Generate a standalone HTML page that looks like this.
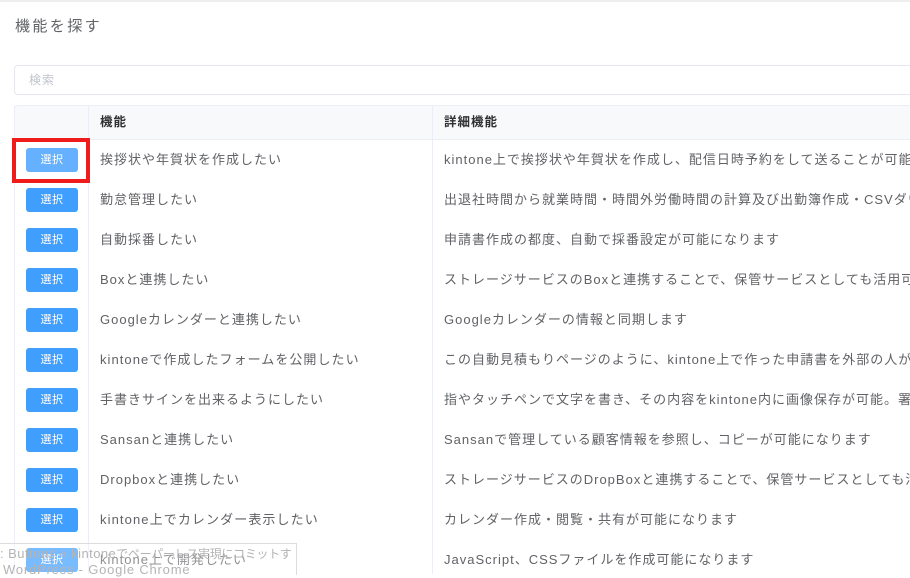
<!DOCTYPE html>
<html lang="ja"><head><meta charset="utf-8"><style>
html,body{margin:0;padding:0;background:#fff}
body{width:910px;height:574px;position:relative;overflow:hidden;font-family:"Liberation Sans","Noto Sans CJK JP",sans-serif;color:#606266;font-size:13px;letter-spacing:1px}
.a{position:absolute;white-space:nowrap}
.t{line-height:18px;filter:blur(.35px)}
.d{width:466px;overflow:hidden}
.b{position:absolute;left:26px;width:52px;height:24px;background:#409eff;border-radius:3px;color:#fff;font-size:11px;letter-spacing:.5px;line-height:25px;text-align:center;filter:blur(.2px)}
.l{position:absolute;background:#ebeef5}
</style></head><body>
<div class="l" style="left:0;top:0;width:910px;height:2px;background:#eeeeee"></div>
<div class="a t" style="left:15px;top:18px;font-size:15px;letter-spacing:2.4px;color:#606266">機能を探す</div>
<div class="a" style="left:14px;top:65px;width:896px;height:28px;border:1px solid #e4e7ed;border-right:0;border-radius:4px 0 0 4px"></div>
<div class="a t" style="left:29px;top:71px;font-size:12px;letter-spacing:1px;color:#c0c4cc">検索</div>

<div class="a" style="left:14px;top:105px;width:896px;height:33px;background:#f8f9fb;border:1px solid #ebeef5;border-right:0;border-radius:4px 0 0 0"></div>
<div class="l" style="left:14px;top:106px;width:1px;height:468px"></div>
<div class="l" style="left:88px;top:106px;width:1px;height:468px"></div>
<div class="l" style="left:432px;top:106px;width:1px;height:468px"></div>
<div class="a t" style="left:100px;top:113px;font-weight:700;font-size:12.5px;color:#303133">機能</div>
<div class="a t" style="left:444px;top:113px;font-weight:700;font-size:12.5px;color:#303133">詳細機能</div>

<div class="b" style="top:148px;background:#66b1ff">選択</div>
<div class="b" style="top:188px">選択</div>
<div class="b" style="top:228px">選択</div>
<div class="b" style="top:268px">選択</div>
<div class="b" style="top:308px">選択</div>
<div class="b" style="top:348px">選択</div>
<div class="b" style="top:388px">選択</div>
<div class="b" style="top:428px">選択</div>
<div class="b" style="top:468px">選択</div>
<div class="b" style="top:508px">選択</div>
<div class="b" style="top:548px">選択</div>

<div class="a t" style="left:100px;top:151px">挨拶状や年賀状を作成したい</div>
<div class="a t" style="left:100px;top:191px">勤怠管理したい</div>
<div class="a t" style="left:100px;top:231px">自動採番したい</div>
<div class="a t" style="left:100px;top:271px">Boxと連携したい</div>
<div class="a t" style="left:100px;top:311px">Googleカレンダーと連携したい</div>
<div class="a t" style="left:100px;top:351px;letter-spacing:1.05px">kintoneで作成したフォームを公開したい</div>
<div class="a t" style="left:100px;top:391px">手書きサインを出来るようにしたい</div>
<div class="a t" style="left:100px;top:431px">Sansanと連携したい</div>
<div class="a t" style="left:100px;top:471px">Dropboxと連携したい</div>
<div class="a t" style="left:100px;top:511px;letter-spacing:1.1px">kintone上でカレンダー表示したい</div>
<div class="a t" style="left:100px;top:551px">kintone上で開発したい</div>

<div class="a t d" style="left:444px;top:151px">kintone上で挨拶状や年賀状を作成し、配信日時予約をして送ることが可能です</div>
<div class="a t d" style="left:444px;top:191px">出退社時間から就業時間・時間外労働時間の計算及び出勤簿作成・CSVダウンロードが可能です</div>
<div class="a t d" style="left:444px;top:231px">申請書作成の都度、自動で採番設定が可能になります</div>
<div class="a t d" style="left:444px;top:271px">ストレージサービスのBoxと連携することで、保管サービスとしても活用可能です</div>
<div class="a t d" style="left:444px;top:311px">Googleカレンダーの情報と同期します</div>
<div class="a t d" style="left:444px;top:351px">この自動見積もりページのように、kintone上で作った申請書を外部の人が利用できます</div>
<div class="a t d" style="left:444px;top:391px">指やタッチペンで文字を書き、その内容をkintone内に画像保存が可能。署名にも</div>
<div class="a t d" style="left:444px;top:431px">Sansanで管理している顧客情報を参照し、コピーが可能になります</div>
<div class="a t d" style="left:444px;top:471px">ストレージサービスのDropBoxと連携することで、保管サービスとしても活用可能です</div>
<div class="a t d" style="left:444px;top:511px">カレンダー作成・閲覧・共有が可能になります</div>
<div class="a t d" style="left:444px;top:551px">JavaScript、CSSファイルを作成可能になります</div>

<div class="a" style="left:12px;top:138px;width:70px;height:37px;border:4px solid #f01c1c"></div>

<div class="a" style="left:0;top:543px;width:296px;height:31px;background:rgba(255,255,255,.3);border:1px solid #dcdcdc;border-left:0;border-bottom:0"></div>
<div class="a" style="left:0;top:546px;width:296px;height:16px;overflow:hidden;font-size:13px;letter-spacing:.45px;line-height:16px;color:#b4b4b4;filter:blur(.3px)">: Buttons « kintone<span style="font-size:12px;letter-spacing:-.3px">でペーパーレス実現にコミットす</span></div>
<div class="a" style="left:3px;top:562px;font-size:13px;letter-spacing:.8px;line-height:16px;color:#b4b4b4;filter:blur(.3px)">WordPress - Google Chrome</div>
</body></html>
